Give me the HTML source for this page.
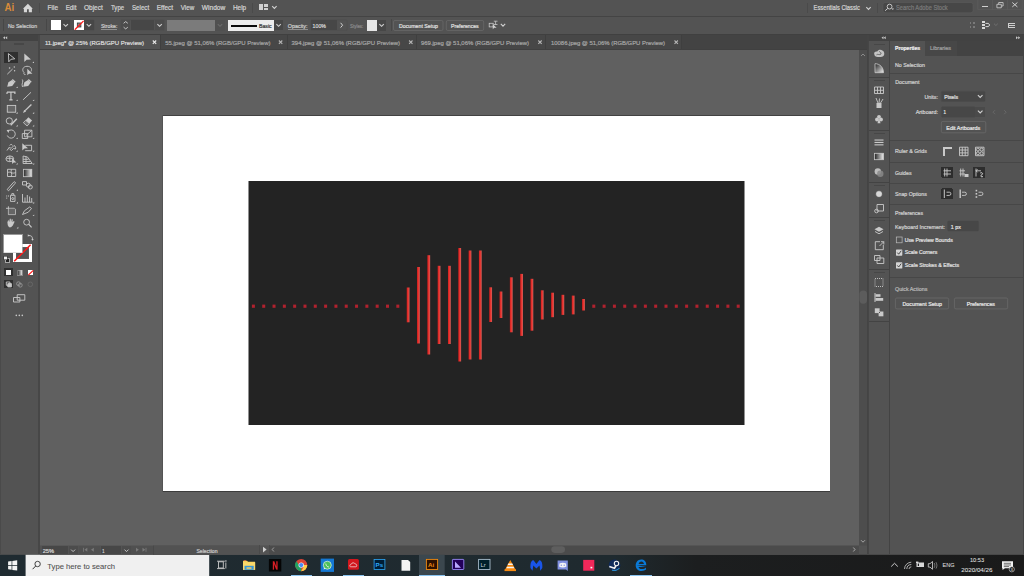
<!DOCTYPE html>
<html><head><meta charset="utf-8">
<style>
*{margin:0;padding:0}
html,body{width:1024px;height:576px;overflow:hidden;background:#535353}
svg{position:absolute;left:0;top:0;display:block}
text{font-family:"Liberation Sans",sans-serif;white-space:pre;stroke-width:0.22px;paint-order:stroke}
</style></head><body>
<svg width="1024" height="576" viewBox="0 0 1024 576" shape-rendering="crispEdges">
<rect x="0" y="0" width="1024" height="576" fill="#535353" />
<rect x="0" y="16" width="1024" height="1" fill="#444444" />
<rect x="0" y="34" width="1024" height="1" fill="#404040" />
<rect x="0" y="35" width="38" height="6" fill="#424242" />
<rect x="38" y="35" width="2" height="519" fill="#474747" />
<rect x="40" y="35" width="819" height="15" fill="#424242" />
<rect x="40" y="50" width="819" height="495.7" fill="#606060" shape-rendering="geometricPrecision"/>
<rect x="162" y="115" width="668" height="1" fill="#424242" />
<rect x="162" y="491" width="668" height="1" fill="#3c3c3c" />
<rect x="162" y="115" width="1" height="377" fill="#545454" />
<rect x="163" y="116" width="667" height="375" fill="#ffffff" />
<rect x="248.5" y="181" width="496" height="244" fill="#232323" shape-rendering="geometricPrecision"/>
<rect x="859" y="50" width="8" height="495.7" fill="#4d4d4d" shape-rendering="geometricPrecision"/>
<rect x="859" y="545.7" width="8" height="9.1" fill="#535353" shape-rendering="geometricPrecision"/>
<rect x="867" y="35" width="2" height="519" fill="#444444" />
<rect x="869" y="35" width="155" height="6" fill="#424242" />
<rect x="889" y="41" width="1" height="513" fill="#424242" />
<defs><linearGradient id="tb" x1="0" x2="1" y1="0" y2="0"><stop offset="0" stop-color="#1f2b31"/><stop offset="0.6" stop-color="#1f2a2f"/><stop offset="0.68" stop-color="#1c1e1f"/><stop offset="1" stop-color="#1a1a1a"/></linearGradient></defs>
<rect x="0" y="554.8" width="1024" height="21.2" fill="url(#tb)" shape-rendering="geometricPrecision"/>
<rect x="25.6" y="554.8" width="183.6" height="21.2" fill="#f0f0f0" shape-rendering="geometricPrecision"/>
<text x="4.5" y="11.2" font-size="11" font-weight="700" fill="#d88b3a" textLength="9.7" lengthAdjust="spacingAndGlyphs" style="font-family:Liberation Sans">Ai</text>
<path d="M22.9 8.7 L27.9 3.75 L32.8 8.7 L31.9 8.7 L31.9 12.2 L28.8 12.2 L28.8 9.2 L27 9.2 L27 12.2 L23.9 12.2 L23.9 8.7 Z" fill="#d6d6d6" shape-rendering="geometricPrecision"/>
<rect x="39" y="3" width="1" height="10" fill="#4a4a4a" />
<rect x="252" y="3" width="1" height="10" fill="#4a4a4a" />
<rect x="258.6" y="3.75" width="4.6" height="6.35" fill="#cfcfcf" />
<rect x="264.3" y="3.75" width="3.9" height="3.1" fill="#cfcfcf" />
<rect x="264.3" y="7.6" width="3.9" height="2.5" fill="#cfcfcf" />
<path d="M272.20 6.20 L274.40 8.40 L276.60 6.20" fill="none" stroke="#d0d0d0" stroke-width="1.15" shape-rendering="geometricPrecision"/>
<rect x="807" y="3" width="1" height="10" fill="#4a4a4a" />
<path d="M866.30 7.20 L868.50 9.40 L870.70 7.20" fill="none" stroke="#d0d0d0" stroke-width="1.15" shape-rendering="geometricPrecision"/>
<rect x="877" y="3" width="1" height="10" fill="#4a4a4a" />
<rect x="883" y="2.5" width="90" height="10.3" rx="2" fill="#474747" stroke="#5c5c5c" stroke-width="0.6" shape-rendering="geometricPrecision"/>
<circle cx="889.6" cy="6.6" r="2.4" fill="none" stroke="#d0d0d0" stroke-width="0.9" shape-rendering="geometricPrecision"/><path d="M887.8 8.4 L885.2 10.7" stroke="#d0d0d0" stroke-width="1" shape-rendering="geometricPrecision"/><path d="M891.6 8.6 L894 8.6 L892.8 9.9 Z" fill="#d0d0d0" shape-rendering="geometricPrecision"/>
<path d="M977.8 0 V9.7 H1022.2 V0 M992.5 0 V9.7 M1007.5 0 V9.7" fill="none" stroke="#5f5f5f" stroke-width="0.6" shape-rendering="geometricPrecision"/>
<rect x="982.2" y="6.2" width="5.6" height="1" fill="#d0d0d0" />
<path d="M996.9 4.3 H1001.3 V7.8 H996.9 Z M998.7 4.3 V2.5 H1003.1 V6 H1001.3" fill="none" stroke="#d0d0d0" stroke-width="0.8" shape-rendering="geometricPrecision"/>
<path d="M1012.3 2.5 L1017.4 6.9 M1017.4 2.5 L1012.3 6.9" stroke="#d0d0d0" stroke-width="1" shape-rendering="geometricPrecision"/>
<rect x="3" y="19" width="1" height="12" fill="#474747" />
<rect x="46" y="19" width="1" height="12" fill="#474747" />
<rect x="49.5" y="19.8" width="21.3" height="10.8" rx="1" fill="none" stroke="#4f4f4f" stroke-width="0.7" shape-rendering="geometricPrecision"/>
<rect x="50.5" y="20.1" width="10.6" height="10.3" fill="#ffffff" />
<rect x="61.1" y="20.1" width="9.1" height="10.3" fill="#474747" />
<path d="M63.50 24.10 L65.70 26.30 L67.90 24.10" fill="none" stroke="#d0d0d0" stroke-width="1.15" shape-rendering="geometricPrecision"/>
<rect x="73" y="19.8" width="21.3" height="10.8" rx="1" fill="none" stroke="#4f4f4f" stroke-width="0.7" shape-rendering="geometricPrecision"/>
<rect x="74" y="20.1" width="10.2" height="10.3" fill="#ffffff" />
<rect x="77.3" y="23" width="3.6" height="4" fill="#8a8a8a" stroke="#333" stroke-width="0.8" shape-rendering="geometricPrecision"/>
<path d="M74.8 29.8 L83.6 20.9" stroke="#ff1a1a" stroke-width="1.3" shape-rendering="geometricPrecision"/>
<rect x="84.2" y="20.1" width="9.4" height="10.3" fill="#474747" />
<path d="M86.70 24.10 L88.90 26.30 L91.10 24.10" fill="none" stroke="#d0d0d0" stroke-width="1.15" shape-rendering="geometricPrecision"/>
<rect x="100.9" y="28.9" width="16.5" height="0.6" fill="#8e8e8e" />
<rect x="120.8" y="19.9" width="43.5" height="10.5" rx="1" fill="none" stroke="#4f4f4f" stroke-width="0.7" shape-rendering="geometricPrecision"/>
<rect x="121.3" y="20.3" width="8.9" height="9.9" fill="#4c4c4c" />
<path d="M123.6 23.3 L125.7 21.6 L127.8 23.3 M123.6 27.2 L125.7 28.9 L127.8 27.2" fill="none" stroke="#d0d0d0" stroke-width="0.9" shape-rendering="geometricPrecision"/>
<rect x="130.9" y="20.3" width="23.1" height="9.9" fill="#474747" />
<rect x="155.4" y="20.3" width="8.5" height="9.9" fill="#4c4c4c" />
<path d="M157.40 24.10 L159.60 26.30 L161.80 24.10" fill="none" stroke="#d0d0d0" stroke-width="1.15" shape-rendering="geometricPrecision"/>
<rect x="167" y="19.7" width="48.3" height="11.1" fill="#7b7b7b" />
<rect x="215.3" y="19.7" width="9.5" height="11.1" fill="#505050" />
<path d="M217.80 24.10 L220.00 26.30 L222.20 24.10" fill="none" stroke="#6a6a6a" stroke-width="1.15" shape-rendering="geometricPrecision"/>
<rect x="228.2" y="19.7" width="45.7" height="10.8" fill="#ececec" />
<rect x="231" y="24.5" width="26" height="2" fill="#0a0a0a" />
<rect x="273.9" y="19.9" width="9.5" height="10.5" fill="#474747" />
<path d="M276.40 24.10 L278.60 26.30 L280.80 24.10" fill="none" stroke="#d0d0d0" stroke-width="1.15" shape-rendering="geometricPrecision"/>
<rect x="287.8" y="28.9" width="19.7" height="0.6" fill="#8e8e8e" />
<rect x="310.8" y="19.9" width="36.3" height="10.5" rx="1" fill="none" stroke="#4f4f4f" stroke-width="0.7" shape-rendering="geometricPrecision"/>
<rect x="311.3" y="20.3" width="25.4" height="9.9" fill="#474747" />
<path d="M340.6 22.8 L342.6 25.2 L340.6 27.6" fill="none" stroke="#d0d0d0" stroke-width="1" shape-rendering="geometricPrecision"/>
<rect x="367" y="20.3" width="9.9" height="10.3" fill="#e6e6e6" />
<rect x="376.9" y="20.3" width="9.5" height="10.3" fill="#474747" />
<path d="M379.40 24.10 L381.60 26.30 L383.80 24.10" fill="none" stroke="#d0d0d0" stroke-width="1.15" shape-rendering="geometricPrecision"/>
<rect x="390.5" y="19" width="1" height="12" fill="#484848" />
<rect x="393.5" y="20.5" width="49.5" height="10" rx="1.5" fill="#535353" stroke="#6c6c6c" stroke-width="0.7" shape-rendering="geometricPrecision"/>
<rect x="446.3" y="20.5" width="37.4" height="10" rx="1.5" fill="#535353" stroke="#6c6c6c" stroke-width="0.7" shape-rendering="geometricPrecision"/>
<g fill="none" stroke="#c8c8c8" stroke-width="0.8" shape-rendering="geometricPrecision"><rect x="489.2" y="23.3" width="4" height="3.6"/><path d="M493.8 21.2 H497.5 M495.6 21.2 V24.5 M493.8 24.5 H497.5"/></g><path d="M492.8 24.2 L492.8 29.2 L494.2 27.8 L496.6 27.8 Z" fill="#d0d0d0" shape-rendering="geometricPrecision"/>
<path d="M500.80 23.90 L503.00 26.10 L505.20 23.90" fill="none" stroke="#d0d0d0" stroke-width="1.15" shape-rendering="geometricPrecision"/>
<rect x="969.5" y="22.2" width="1.9" height="1.9" fill="#7a7a7a" />
<rect x="969.5" y="26" width="1.9" height="1.9" fill="#7a7a7a" />
<rect x="973.3" y="22.2" width="1.9" height="1.9" fill="#7a7a7a" />
<rect x="973.3" y="26" width="1.9" height="1.9" fill="#7a7a7a" />
<rect x="982.3" y="21.1" width="2.4" height="2.2" fill="#d8d8d8" />
<rect x="982.3" y="24.2" width="2.4" height="2.2" fill="#d8d8d8" />
<rect x="982.3" y="27" width="2.4" height="2.2" fill="#d8d8d8" />
<path d="M985.5 23.4 H988.3 A1.7 1.7 0 0 1 988.3 26.6 H985.5" fill="none" stroke="#d8d8d8" stroke-width="1" shape-rendering="geometricPrecision"/>
<path d="M994.00 23.70 L995.90 25.50 L997.80 23.70" fill="none" stroke="#7a7a7a" stroke-width="0.7" shape-rendering="geometricPrecision"/>
<rect x="1008.2" y="22.9" width="6.5" height="0.9" fill="#cfcfcf" />
<rect x="1008.2" y="25" width="6.5" height="0.9" fill="#cfcfcf" />
<rect x="1008.2" y="26.8" width="6.5" height="0.9" fill="#cfcfcf" />
<rect x="1008.2" y="22.9" width="1.2" height="4.8" fill="#cfcfcf" />
<rect x="40" y="35" width="827" height="14" fill="#434343" />
<rect x="40" y="49" width="827" height="1" fill="#404040" />
<rect x="40" y="35" width="120" height="14" fill="#535353" />
<rect x="161" y="35" width="126" height="14" fill="#474747" />
<rect x="160" y="35" width="1" height="14" fill="#3f3f3f" />
<rect x="288" y="35" width="128" height="14" fill="#474747" />
<rect x="287" y="35" width="1" height="14" fill="#3f3f3f" />
<rect x="417" y="35" width="128" height="14" fill="#474747" />
<rect x="416" y="35" width="1" height="14" fill="#3f3f3f" />
<rect x="546" y="35" width="135" height="14" fill="#474747" />
<rect x="545" y="35" width="1" height="14" fill="#3f3f3f" />
<rect x="681" y="35" width="1" height="14" fill="#3f3f3f" />
<path d="M152.80 40.50 L156.20 43.90 M156.20 40.50 L152.80 43.90" stroke="#e8e8e8" stroke-width="1.1" shape-rendering="geometricPrecision"/>
<path d="M278.90 40.50 L282.30 43.90 M282.30 40.50 L278.90 43.90" stroke="#b4b4b4" stroke-width="1.1" shape-rendering="geometricPrecision"/>
<path d="M409.10 40.50 L412.50 43.90 M412.50 40.50 L409.10 43.90" stroke="#b4b4b4" stroke-width="1.1" shape-rendering="geometricPrecision"/>
<path d="M538.30 40.50 L541.70 43.90 M541.70 40.50 L538.30 43.90" stroke="#b4b4b4" stroke-width="1.1" shape-rendering="geometricPrecision"/>
<path d="M674.50 40.50 L677.90 43.90 M677.90 40.50 L674.50 43.90" stroke="#b4b4b4" stroke-width="1.1" shape-rendering="geometricPrecision"/>
<rect x="0" y="35" width="38" height="6" fill="#434343" />
<rect x="0" y="41" width="1" height="513" fill="#4a4a4a" />
<path d="M5 36.3 L3 37.8 L5 39.3 Z M7.2 36.3 L5.2 37.8 L7.2 39.3 Z" fill="#c8c8c8" shape-rendering="geometricPrecision"/>
<rect x="13.8" y="43.3" width="10.1" height="1.4" fill="#474747" />
<rect x="4" y="52" width="14.2" height="11" rx="1" fill="#2f2f2f"/>
<g fill="none" stroke="#c9c9c9" stroke-width="0.9" stroke-linejoin="round" shape-rendering="geometricPrecision"><path d="M8.4 53.6 L8.8 61.8 L10.9 59.3 L14.8 58.8 Z"/></g>
<g fill="#c9c9c9" stroke="none" shape-rendering="geometricPrecision"><path d="M24.3 53.5 L24.3 61.9 L26.6 59.7 L31 59.6 Z"/></g>
<path d="M34.00 61.40 L34.00 63.00 L32.40 63.00 Z" fill="#cfcfcf" shape-rendering="geometricPrecision"/>
<g fill="none" stroke="#c9c9c9" stroke-width="0.9" stroke-linejoin="round" shape-rendering="geometricPrecision"><path d="M7.3 74.2 L12.6 69"/></g>
<g fill="#c9c9c9" stroke="none" shape-rendering="geometricPrecision"><circle cx="9.6" cy="68" r="0.8"/><circle cx="14.3" cy="67" r="0.7"/><circle cx="14.6" cy="70.7" r="0.7"/></g>
<g fill="none" stroke="#c9c9c9" stroke-width="0.9" stroke-linejoin="round" shape-rendering="geometricPrecision"><path d="M24 72.5 C21.5 70 23 66.3 27 66.3 C31 66.3 32.3 69 31 71.5"/><path d="M24 72.5 C23.5 74 24.5 75 25.5 74.5"/></g>
<g fill="#c9c9c9" stroke="none" shape-rendering="geometricPrecision"><path d="M27.3 68.8 L27.3 75.3 L29 73.7 L32.4 73.7 Z"/></g>
<g fill="#c9c9c9" stroke="none" shape-rendering="geometricPrecision"><path d="M7.2 86.8 L8.4 82.2 L12 80 L14.6 82.8 L12.2 86 Z"/></g>
<path d="M12.3 79.5 L15.2 82.3" stroke="#c9c9c9" stroke-width="1.4" shape-rendering="geometricPrecision"/>
<g fill="#c9c9c9" stroke="none" shape-rendering="geometricPrecision"><path d="M23.2 86.8 L24.4 82.2 L28 80 L30.6 82.8 L28.2 86 Z"/></g>
<path d="M28.3 79.5 L31.2 82.3" stroke="#c9c9c9" stroke-width="1.4" shape-rendering="geometricPrecision"/>
<g fill="none" stroke="#c9c9c9" stroke-width="0.9" stroke-linejoin="round" shape-rendering="geometricPrecision"><path d="M22.3 79.5 C24 81 21 84 22.5 87"/></g>
<path d="M17.70 86.40 L17.70 88.00 L16.10 88.00 Z" fill="#cfcfcf" shape-rendering="geometricPrecision"/>
<path d="M7 92.2 H14.9 V94 M7 92.2 V94 M10.95 92.2 V99.9 M9.3 99.9 H12.6" fill="none" stroke="#c9c9c9" stroke-width="1.2" shape-rendering="geometricPrecision"/>
<g fill="none" stroke="#c9c9c9" stroke-width="0.9" stroke-linejoin="round" shape-rendering="geometricPrecision"><path d="M23.1 99.8 L31 92.3"/></g>
<path d="M17.70 99.40 L17.70 101.00 L16.10 101.00 Z" fill="#cfcfcf" shape-rendering="geometricPrecision"/>
<path d="M34.20 99.40 L34.20 101.00 L32.60 101.00 Z" fill="#cfcfcf" shape-rendering="geometricPrecision"/>
<rect x="7.3" y="105.4" width="8.4" height="6.8" fill="#666" stroke="#c9c9c9" stroke-width="0.9" shape-rendering="geometricPrecision"/>
<g fill="#c9c9c9" stroke="none" shape-rendering="geometricPrecision"><path d="M23 113 L24 110.2 L25.6 109.8 L26 111.4 Z"/></g>
<path d="M25.4 110.4 L31.4 104.5" stroke="#c9c9c9" stroke-width="1.3" shape-rendering="geometricPrecision"/>
<path d="M17.70 112.10 L17.70 113.70 L16.10 113.70 Z" fill="#cfcfcf" shape-rendering="geometricPrecision"/>
<path d="M34.20 112.10 L34.20 113.70 L32.60 113.70 Z" fill="#cfcfcf" shape-rendering="geometricPrecision"/>
<g fill="none" stroke="#c9c9c9" stroke-width="0.9" stroke-linejoin="round" shape-rendering="geometricPrecision"><circle cx="9.3" cy="120.9" r="3.1"/></g>
<path d="M10.7 125.3 L16.8 118.8" stroke="#c9c9c9" stroke-width="1.4" shape-rendering="geometricPrecision"/>
<path d="M23.4 122.7 L28.4 117.3 L32.1 120.5 L27.1 126 Z" fill="#c9c9c9" shape-rendering="geometricPrecision"/><path d="M23.4 122.7 L25.6 120.3 L29.3 123.5 L27.1 126 Z" fill="#707070" stroke="#c9c9c9" stroke-width="0.7" shape-rendering="geometricPrecision"/>
<path d="M17.70 124.80 L17.70 126.40 L16.10 126.40 Z" fill="#cfcfcf" shape-rendering="geometricPrecision"/>
<path d="M34.20 124.80 L34.20 126.40 L32.60 126.40 Z" fill="#cfcfcf" shape-rendering="geometricPrecision"/>
<g fill="none" stroke="#c9c9c9" stroke-width="0.9" stroke-linejoin="round" shape-rendering="geometricPrecision"><path d="M8.2 131.2 A4.1 4.1 0 1 1 7.3 135.5"/></g>
<g fill="#c9c9c9" stroke="none" shape-rendering="geometricPrecision"><path d="M6.6 130 L9.6 129.8 L8.4 133 Z"/></g>
<g fill="none" stroke="#c9c9c9" stroke-width="0.9" stroke-linejoin="round" shape-rendering="geometricPrecision"><rect x="22.3" y="133.6" width="5.4" height="4.9"/><rect x="24.6" y="130.2" width="7.3" height="6.6"/><path d="M26 135.5 L31.6 130.4"/></g>
<path d="M17.70 137.40 L17.70 139.00 L16.10 139.00 Z" fill="#cfcfcf" shape-rendering="geometricPrecision"/>
<path d="M34.20 137.40 L34.20 139.00 L32.60 139.00 Z" fill="#cfcfcf" shape-rendering="geometricPrecision"/>
<g fill="none" stroke="#c9c9c9" stroke-width="0.9" stroke-linejoin="round" shape-rendering="geometricPrecision"><path d="M7 150.5 L9.5 147 L11 148.5 L14 145.5 C15.5 146 16 147.5 15.5 149 L13.5 148.5 L11.5 150.5 L9.5 149"/><path d="M9.7 145.5 C10.5 144 12 144.2 12.6 145.5"/></g>
<g fill="none" stroke="#c9c9c9" stroke-width="0.9" stroke-linejoin="round" shape-rendering="geometricPrecision"><path d="M25.2 145.3 H31.6 V150.7 H25.2"/></g>
<g fill="#c9c9c9" stroke="none" shape-rendering="geometricPrecision"><path d="M22.3 143.3 L22.3 150.5 L24.4 148.5 L28 148.3 Z"/></g>
<path d="M17.70 150.20 L17.70 151.80 L16.10 151.80 Z" fill="#cfcfcf" shape-rendering="geometricPrecision"/>
<path d="M34.20 150.20 L34.20 151.80 L32.60 151.80 Z" fill="#cfcfcf" shape-rendering="geometricPrecision"/>
<g fill="none" stroke="#c9c9c9" stroke-width="0.9" stroke-linejoin="round" shape-rendering="geometricPrecision"><ellipse cx="9.8" cy="158.8" rx="3.9" ry="2.9"/><path d="M6.3 158.3 H13.3 M9.8 156 V161.6"/></g>
<g fill="#c9c9c9" stroke="none" shape-rendering="geometricPrecision"><path d="M12.1 158.2 L12.1 164 L13.7 162.5 L16.4 162.5 Z"/></g>
<g fill="none" stroke="#c9c9c9" stroke-width="0.9" stroke-linejoin="round" shape-rendering="geometricPrecision"><path d="M23.1 156 V163.5 H32.2 L27.5 157 Z M23.1 159.3 H28.5 M23.1 161.5 H30.5 M26 156.5 V163.5"/></g>
<path d="M17.70 162.90 L17.70 164.50 L16.10 164.50 Z" fill="#cfcfcf" shape-rendering="geometricPrecision"/>
<path d="M34.20 162.90 L34.20 164.50 L32.60 164.50 Z" fill="#cfcfcf" shape-rendering="geometricPrecision"/>
<g fill="none" stroke="#c9c9c9" stroke-width="0.9" stroke-linejoin="round" shape-rendering="geometricPrecision"><rect x="7.5" y="169.3" width="8.2" height="7.2"/><path d="M8 172.5 C10 171 12 174.5 15.5 172.5 M11.5 169.5 C10 172 13 174 11 176.5"/></g>
<defs><linearGradient id="gr1" x1="0" x2="1"><stop offset="0" stop-color="#222"/><stop offset="1" stop-color="#eee"/></linearGradient></defs>
<rect x="23.4" y="169.3" width="8.4" height="7.4" fill="url(#gr1)" stroke="#c9c9c9" stroke-width="0.8" shape-rendering="geometricPrecision"/>
<g fill="none" stroke="#c9c9c9" stroke-width="0.9" stroke-linejoin="round" shape-rendering="geometricPrecision"><path d="M7.2 189.5 L13.6 182.2 C14.6 181 16 182.4 15 183.5 L8.6 190.8 Z"/></g>
<g fill="none" stroke="#c9c9c9" stroke-width="0.9" stroke-linejoin="round" shape-rendering="geometricPrecision"><rect x="22.5" y="181.6" width="4" height="3.4"/><circle cx="28.3" cy="185.2" r="2"/><circle cx="30.3" cy="187" r="2"/></g>
<path d="M18.00 189.20 L18.00 190.80 L16.40 190.80 Z" fill="#cfcfcf" shape-rendering="geometricPrecision"/>
<g fill="none" stroke="#c9c9c9" stroke-width="0.9" stroke-linejoin="round" shape-rendering="geometricPrecision"><rect x="10.5" y="195.3" width="4.5" height="6.1"/><circle cx="12.75" cy="198.6" r="1"/><path d="M11.8 195.3 V193.6 H13.7 V195.3"/></g>
<g fill="#c9c9c9" stroke="none" shape-rendering="geometricPrecision"><rect x="6.2" y="195.5" width="1" height="1"/><rect x="8" y="195.5" width="1" height="1"/><rect x="6.2" y="197.6" width="1" height="1"/></g>
<g fill="none" stroke="#c9c9c9" stroke-width="0.9" stroke-linejoin="round" shape-rendering="geometricPrecision"><path d="M22.5 194 V202.2 H32.6 M25 202 V197.5 M27.3 202 V195 M29.6 202 V196.5 M31.7 202 V198"/></g>
<path d="M18.00 201.80 L18.00 203.40 L16.40 203.40 Z" fill="#cfcfcf" shape-rendering="geometricPrecision"/>
<path d="M34.20 201.80 L34.20 203.40 L32.60 203.40 Z" fill="#cfcfcf" shape-rendering="geometricPrecision"/>
<g fill="none" stroke="#c9c9c9" stroke-width="0.9" stroke-linejoin="round" shape-rendering="geometricPrecision"><path d="M6 208.3 H14.5 L15.4 209.2 V214.6 H8.4 V206.3"/></g>
<rect x="8.8" y="208.8" width="6.2" height="5.4" fill="#666" shape-rendering="geometricPrecision"/>
<g fill="none" stroke="#c9c9c9" stroke-width="0.9" stroke-linejoin="round" shape-rendering="geometricPrecision"><path d="M22.5 214.5 L24.5 210.7 L29.7 207 L31.5 208.5 L28.3 212.2 Z"/></g>
<path d="M34.20 214.40 L34.20 216.00 L32.60 216.00 Z" fill="#cfcfcf" shape-rendering="geometricPrecision"/>
<g fill="#c9c9c9" stroke="none" shape-rendering="geometricPrecision"><path d="M7.4 222.3 L8.3 219.7 L9.2 222 L9.8 218.7 L10.8 218.7 L11 222 L11.8 219 L12.8 219.5 L12.5 222.3 L13.8 221 L14.6 221.8 L12.8 225.6 L11 227.3 L9 227.3 L7.8 225.3 Z"/></g>
<path d="M18.30 226.80 L18.30 228.40 L16.70 228.40 Z" fill="#cfcfcf" shape-rendering="geometricPrecision"/>
<g fill="none" stroke="#c9c9c9" stroke-width="0.9" stroke-linejoin="round" shape-rendering="geometricPrecision"><circle cx="26.6" cy="222.2" r="2.9"/></g>
<path d="M28.8 224.4 L31.6 227.3" stroke="#c9c9c9" stroke-width="1.2" shape-rendering="geometricPrecision"/>
<rect x="3" y="231.5" width="32" height="0.7" fill="#474747" />
<rect x="13" y="243.8" width="18.6" height="18.5" fill="#ffffff" />
<rect x="17" y="247.8" width="10.6" height="10.5" fill="#535353" />
<rect x="16.5" y="247.3" width="11.6" height="11.5" fill="none" stroke="#333" stroke-width="0.8"/>
<path d="M14.2 261.3 L30.6 244.8" stroke="#ff1818" stroke-width="1.5" shape-rendering="geometricPrecision"/>
<rect x="3.8" y="234.5" width="18.4" height="18.3" fill="#ffffff" stroke="#c8c8c8" stroke-width="0.6"/>
<g fill="none" stroke="#c9c9c9" stroke-width="0.9" stroke-linejoin="round" shape-rendering="geometricPrecision"><path d="M28.5 235.5 C31.5 235.5 32.5 236.5 32.5 239.5"/></g>
<g fill="#c9c9c9" stroke="none" shape-rendering="geometricPrecision"><path d="M27.8 234.3 L29.6 235.5 L27.8 236.8 Z M31.3 238.9 L32.5 240.7 L33.8 238.9 Z"/></g>
<rect x="5.8" y="258.5" width="3.6" height="3.6" fill="#222" stroke="#ddd" stroke-width="0.6"/><rect x="3.6" y="256.3" width="3.6" height="3.6" fill="#eee" stroke="#333" stroke-width="0.6"/>
<rect x="4" y="268.3" width="9.2" height="8" fill="#2f2f2f"/>
<rect x="6" y="270.3" width="5.2" height="4.8" fill="#ffffff" />
<rect x="17.3" y="270.3" width="5" height="4.8" fill="url(#gr1)" stroke="#bbb" stroke-width="0.5"/>
<rect x="28.2" y="270.3" width="5.2" height="4.8" fill="#ffffff" />
<path d="M28.4 275 L33.3 270.4" stroke="#ff1818" stroke-width="1.1" shape-rendering="geometricPrecision"/>
<rect x="4" y="280.3" width="9.2" height="8" fill="#2f2f2f"/>
<g fill="none" stroke="#c9c9c9" stroke-width="0.9" stroke-linejoin="round" shape-rendering="geometricPrecision"><rect x="6.3" y="282" width="3.6" height="3.3"/><rect x="7.8" y="283.6" width="3.6" height="3.3" fill="#c9c9c9"/></g>
<g fill="none" stroke="#9a9a9a" stroke-width="0.8" shape-rendering="geometricPrecision"><circle cx="18.5" cy="283.7" r="1.9"/><circle cx="20.3" cy="285.2" r="1.9"/></g>
<g fill="none" stroke="#6a6a6a" stroke-width="0.8" shape-rendering="geometricPrecision"><circle cx="30.3" cy="284.3" r="2.3"/></g>
<g fill="none" stroke="#c9c9c9" stroke-width="0.9" stroke-linejoin="round" shape-rendering="geometricPrecision"><rect x="13.5" y="297.5" width="6.4" height="4.5"/><rect x="17.2" y="294.7" width="7.6" height="5.5"/></g>
<g fill="#c9c9c9" stroke="none" shape-rendering="geometricPrecision"><circle cx="16.3" cy="315.4" r="0.8"/><circle cx="19.3" cy="315.4" r="0.8"/><circle cx="22.3" cy="315.4" r="0.8"/></g>
<path d="M883.5 36.3 L881.5 37.8 L883.5 39.3 Z M885.7 36.3 L883.7 37.8 L885.7 39.3 Z M1016 36.3 L1018 37.8 L1016 39.3 Z M1018.2 36.3 L1020.2 37.8 L1018.2 39.3 Z" fill="#c8c8c8" shape-rendering="geometricPrecision"/>
<rect x="869" y="41" width="20" height="513" fill="#535353" />
<rect x="869" y="77" width="20" height="1" fill="#434343" />
<rect x="869" y="129.5" width="20" height="1" fill="#434343" />
<rect x="869" y="181.5" width="20" height="1" fill="#434343" />
<rect x="869" y="217" width="20" height="1" fill="#434343" />
<rect x="869" y="269" width="20" height="1" fill="#434343" />
<rect x="869" y="320.5" width="20" height="1" fill="#434343" />
<rect x="873.5" y="43.5" width="11" height="1.3" fill="#474747" />
<rect x="873.5" y="80" width="11" height="1.3" fill="#474747" />
<rect x="873.5" y="132.5" width="11" height="1.3" fill="#474747" />
<rect x="873.5" y="184.5" width="11" height="1.3" fill="#474747" />
<rect x="873.5" y="220" width="11" height="1.3" fill="#474747" />
<rect x="873.5" y="272" width="11" height="1.3" fill="#474747" />
<rect x="868" y="41" width="1" height="513" fill="#464646" />
<rect x="889" y="41" width="1" height="513" fill="#434343" />
<path d="M874.3 54.3 C873.6 52.3 875.3 51 877.3 51.5 C878 49.5 881 49 882.3 50.5 C884.3 51 884.8 54 883.8 55.5 C883 57 880 57.2 878 57 C875.5 57 874.6 56 874.3 54.3 Z" fill="#c4c4c4" shape-rendering="geometricPrecision"/><path d="M876.5 54.8 C877.5 53.6 879.5 55.5 881 54 M879.2 51.5 C880.5 52 881.2 53 881 54" fill="none" stroke="#555" stroke-width="0.8" shape-rendering="geometricPrecision"/>
<defs><linearGradient id="gr2" x1="0" x2="1" y1="0" y2="1"><stop offset="0" stop-color="#202020"/><stop offset="1" stop-color="#f0f0f0"/></linearGradient></defs>
<path d="M875 63.7 C880 63.7 883.5 67.5 883.5 72.7 L875 72.7 Z" fill="url(#gr2)" stroke="#c9c9c9" stroke-width="0.8" shape-rendering="geometricPrecision"/>
<g fill="none" stroke="#c9c9c9" stroke-width="0.9" stroke-linejoin="round" shape-rendering="geometricPrecision"><rect x="874.5" y="87" width="9" height="6.5"/><path d="M874.5 90.3 H883.5 M877.5 87 V93.5 M880.5 87 V93.5"/></g>
<g fill="#c9c9c9" stroke="none" shape-rendering="geometricPrecision"><rect x="876.5" y="103" width="5" height="5"/><path d="M878 103 L876 98 M879 103 L879.5 98.5 M880.5 103 L883 99" stroke="#c9c9c9" stroke-width="0.9"/></g>
<g fill="#c9c9c9" stroke="none" shape-rendering="geometricPrecision"><circle cx="879" cy="116.8" r="1.9"/><circle cx="877" cy="119.5" r="1.9"/><circle cx="881" cy="119.5" r="1.9"/><path d="M878.5 119.5 L877.5 123.3 H880.5 L879.5 119.5 Z"/></g>
<g fill="#c9c9c9" stroke="none" shape-rendering="geometricPrecision"><rect x="874.5" y="139.5" width="9" height="1.1"/><rect x="874.5" y="141.9" width="9" height="1.1"/><rect x="874.5" y="144.3" width="9" height="1.1"/></g>
<rect x="874.5" y="153.3" width="9" height="6.4" fill="url(#gr1)" stroke="#c9c9c9" stroke-width="0.8" shape-rendering="geometricPrecision"/>
<circle cx="877.8" cy="171.5" r="3.2" fill="#bdbdbd" shape-rendering="geometricPrecision"/><circle cx="880.3" cy="173.8" r="3.2" fill="#8a8a8a" fill-opacity="0.85" shape-rendering="geometricPrecision"/>
<circle cx="879" cy="194" r="3" fill="#d8d8d8" stroke="#9a9a9a" stroke-width="0.8" stroke-dasharray="0.7 0.7" shape-rendering="geometricPrecision"/>
<g fill="none" stroke="#c9c9c9" stroke-width="0.9" stroke-linejoin="round" shape-rendering="geometricPrecision"><rect x="877" y="204.5" width="6.5" height="6.5"/><circle cx="876.5" cy="211" r="1.8"/></g>
<g fill="#c9c9c9" stroke="none" shape-rendering="geometricPrecision"><path d="M879 226.8 L883.5 229.3 L879 231.8 L874.5 229.3 Z"/><path d="M875 231.5 L879 233.8 L883 231.5" fill="none" stroke="#c9c9c9" stroke-width="0.9"/></g>
<g fill="none" stroke="#c9c9c9" stroke-width="0.9" stroke-linejoin="round" shape-rendering="geometricPrecision"><path d="M880 241.7 H875.3 V249.7 H883.3 V245 M879.5 246 L883.8 241.7 M881 241.7 H883.8 V244.5"/></g>
<g fill="none" stroke="#c9c9c9" stroke-width="0.9" stroke-linejoin="round" shape-rendering="geometricPrecision"><rect x="874.5" y="255.5" width="5.5" height="5"/><rect x="877" y="258" width="6.8" height="5.5"/></g>
<rect x="875" y="278.5" width="8" height="8" fill="none" stroke="#c9c9c9" stroke-width="0.9" stroke-dasharray="1 1" shape-rendering="geometricPrecision"/><circle cx="879" cy="282.5" r="0.5" fill="#c9c9c9"/>
<g fill="#c9c9c9" stroke="none" shape-rendering="geometricPrecision"><rect x="874.5" y="293" width="1" height="9"/><rect x="875.5" y="294.2" width="5" height="2.6"/><rect x="875.5" y="298" width="7.7" height="2.8"/></g>
<g fill="#c9c9c9" stroke="none" shape-rendering="geometricPrecision"><rect x="874.8" y="308.3" width="4.8" height="4.8"/><rect x="878.6" y="311.5" width="4.8" height="4.8"/></g>
<rect x="878.6" y="311.5" width="1" height="1.6" fill="#535353"/>
<rect x="890" y="41" width="134" height="14.5" fill="#434343" />
<rect x="890" y="41" width="35" height="14.5" fill="#535353" />
<rect x="925" y="41" width="31.5" height="14.5" fill="#474747" />
<rect x="956.5" y="41" width="0.7" height="14.5" fill="#404040" />
<rect x="1023" y="41" width="1" height="513" fill="#444444" />
<rect x="890" y="72.6" width="133" height="1" fill="#474747" />
<rect x="890" y="139.8" width="133" height="1" fill="#474747" />
<rect x="890" y="162" width="133" height="1" fill="#474747" />
<rect x="890" y="183.4" width="133" height="1" fill="#474747" />
<rect x="890" y="203.5" width="133" height="1" fill="#474747" />
<rect x="890" y="276.8" width="133" height="1" fill="#474747" />
<rect x="941.4" y="91.4" width="43.6" height="10.1" rx="1" fill="#474747" stroke="#4c4c4c" stroke-width="0.6" shape-rendering="geometricPrecision"/>
<path d="M977.90 95.15 L980.20 97.45 L982.50 95.15" fill="none" stroke="#d0d0d0" stroke-width="1.15" shape-rendering="geometricPrecision"/>
<rect x="941.4" y="106.8" width="33.6" height="10.4" rx="1" fill="#474747" stroke="#4c4c4c" stroke-width="0.6" shape-rendering="geometricPrecision"/>
<rect x="975" y="107" width="10" height="10" fill="#4a4a4a" />
<path d="M977.90 110.65 L980.20 112.95 L982.50 110.65" fill="none" stroke="#d0d0d0" stroke-width="1.15" shape-rendering="geometricPrecision"/>
<path d="M995 110.2 L993 112.2 L995 114.2 M1004.2 110.2 L1006.2 112.2 L1004.2 114.2" fill="none" stroke="#6a6a6a" stroke-width="0.9" shape-rendering="geometricPrecision"/>
<rect x="941.3" y="121.4" width="44.5" height="11.4" rx="1.5" fill="#535353" stroke="#6e6e6e" stroke-width="0.7" shape-rendering="geometricPrecision"/>
<g fill="none" stroke="#c9c9c9" stroke-width="0.9" stroke-linejoin="round" shape-rendering="geometricPrecision"><path d="M943.5 156 V147.5 H952"/></g>
<g fill="#c9c9c9" stroke="none" shape-rendering="geometricPrecision"><rect x="943" y="147" width="2" height="9"/><rect x="943" y="147" width="9" height="2"/></g>
<g fill="none" stroke="#c9c9c9" stroke-width="0.9" stroke-linejoin="round" shape-rendering="geometricPrecision"><rect x="959.5" y="147.2" width="8.5" height="8.5"/><path d="M962.3 147.2 V155.7 M965.2 147.2 V155.7 M959.5 150 H968 M959.5 152.9 H968"/></g>
<g fill="none" stroke="#c9c9c9" stroke-width="0.9" stroke-linejoin="round" shape-rendering="geometricPrecision"><rect x="975.5" y="147.2" width="8.5" height="8.5"/><circle cx="977.9" cy="149.6" r="1.5"/><circle cx="981.6" cy="149.6" r="1.5"/><circle cx="977.9" cy="153.3" r="1.5"/><circle cx="981.6" cy="153.3" r="1.5"/></g>
<rect x="941.4" y="166.8" width="11.4" height="11.2" rx="1" fill="#2d2d2d"/><rect x="973.3" y="166.8" width="11.7" height="11.2" rx="1" fill="#2d2d2d"/>
<g fill="none" stroke="#c9c9c9" stroke-width="0.9" stroke-linejoin="round" shape-rendering="geometricPrecision"><path d="M944.7 168.5 V176.5 M947 168.5 V176.5 M943.5 170.8 H951 M943.5 174 H951"/></g>
<g fill="none" stroke="#c9c9c9" stroke-width="0.9" stroke-linejoin="round" shape-rendering="geometricPrecision"><path d="M960.7 168.5 V176.5 M963 168.5 V176.5 M959.5 170.8 H965 M959.5 174 H965"/></g>
<g fill="#c9c9c9" stroke="none" shape-rendering="geometricPrecision"><rect x="964.5" y="174" width="4" height="3"/></g>
<g fill="none" stroke="#c9c9c9" stroke-width="0.9" stroke-linejoin="round" shape-rendering="geometricPrecision"><path d="M976 168.5 V176.5 M976 170.8 H981 M977.5 169.3 L976 170.8 L977.5 172.3"/></g>
<g fill="#c9c9c9" stroke="none" shape-rendering="geometricPrecision"><path d="M980.3 173 C982.5 172 983.5 174 981.5 175 C980 175.7 981 177.5 983 176.5" fill="none" stroke="#e0e0e0" stroke-width="1"/></g>
<rect x="941.4" y="188.3" width="11.4" height="10.9" rx="1" fill="#2d2d2d"/>
<g fill="#c9c9c9" stroke="none" shape-rendering="geometricPrecision"><rect x="943.8" y="189.5" width="1" height="8.5"/></g>
<g fill="none" stroke="#c9c9c9" stroke-width="0.9" stroke-linejoin="round" shape-rendering="geometricPrecision"><path d="M946.5 192.2 H949.3 A1.6 1.6 0 0 1 949.3 195.4 H946.5"/></g>
<g fill="#c9c9c9" stroke="none" shape-rendering="geometricPrecision"><rect x="959.5" y="189.5" width="1.4" height="8.5"/></g>
<g fill="none" stroke="#c9c9c9" stroke-width="0.9" stroke-linejoin="round" shape-rendering="geometricPrecision"><path d="M962 192.2 H964.8 A1.6 1.6 0 0 1 964.8 195.4 H962"/></g>
<g fill="#c9c9c9" stroke="none" shape-rendering="geometricPrecision"><rect x="975.6" y="189.8" width="1.6" height="1.6"/><rect x="975.6" y="193" width="1.6" height="1.6"/><rect x="975.6" y="196.2" width="1.6" height="1.6"/></g>
<g fill="none" stroke="#c9c9c9" stroke-width="0.9" stroke-linejoin="round" shape-rendering="geometricPrecision"><path d="M978.5 192.2 H981.3 A1.6 1.6 0 0 1 981.3 195.4 H978.5"/></g>
<rect x="947.6" y="221" width="31" height="10" rx="1" fill="#474747" stroke="#4c4c4c" stroke-width="0.6" shape-rendering="geometricPrecision"/>
<rect x="896.3" y="237" width="5.8" height="5.8" fill="none" stroke="#bdbdbd" stroke-width="0.7" shape-rendering="geometricPrecision"/>
<rect x="896" y="249.5" width="6.3" height="6.2" rx="0.6" fill="#d4d4d4" shape-rendering="geometricPrecision"/><path d="M897.3 252.6 L898.7 254.2 L901.2 250.8" fill="none" stroke="#3a3a3a" stroke-width="0.9" shape-rendering="geometricPrecision"/>
<rect x="896" y="262.3" width="6.3" height="6.2" rx="0.6" fill="#d4d4d4" shape-rendering="geometricPrecision"/><path d="M897.3 265.4 L898.7 267.0 L901.2 263.6" fill="none" stroke="#3a3a3a" stroke-width="0.9" shape-rendering="geometricPrecision"/>
<rect x="895.4" y="298" width="53.3" height="10.9" rx="1.5" fill="#535353" stroke="#6e6e6e" stroke-width="0.7" shape-rendering="geometricPrecision"/>
<rect x="954.4" y="298" width="53.3" height="10.9" rx="1.5" fill="#535353" stroke="#6e6e6e" stroke-width="0.7" shape-rendering="geometricPrecision"/>
<defs><linearGradient id="bar" x1="0" x2="1"><stop offset="0" stop-color="#d01c1c"/><stop offset="0.5" stop-color="#ea3530"/><stop offset="1" stop-color="#d0605a"/></linearGradient></defs>
<rect x="251.90" y="304.6" width="3" height="3.2" fill="#b0222e" shape-rendering="geometricPrecision"/>
<rect x="262.22" y="304.6" width="3" height="3.2" fill="#b0222e" shape-rendering="geometricPrecision"/>
<rect x="272.53" y="304.6" width="3" height="3.2" fill="#b0222e" shape-rendering="geometricPrecision"/>
<rect x="282.85" y="304.6" width="3" height="3.2" fill="#b0222e" shape-rendering="geometricPrecision"/>
<rect x="293.16" y="304.6" width="3" height="3.2" fill="#b0222e" shape-rendering="geometricPrecision"/>
<rect x="303.48" y="304.6" width="3" height="3.2" fill="#b0222e" shape-rendering="geometricPrecision"/>
<rect x="313.79" y="304.6" width="3" height="3.2" fill="#b0222e" shape-rendering="geometricPrecision"/>
<rect x="324.11" y="304.6" width="3" height="3.2" fill="#b0222e" shape-rendering="geometricPrecision"/>
<rect x="334.42" y="304.6" width="3" height="3.2" fill="#b0222e" shape-rendering="geometricPrecision"/>
<rect x="344.74" y="304.6" width="3" height="3.2" fill="#b0222e" shape-rendering="geometricPrecision"/>
<rect x="355.05" y="304.6" width="3" height="3.2" fill="#b0222e" shape-rendering="geometricPrecision"/>
<rect x="365.37" y="304.6" width="3" height="3.2" fill="#b0222e" shape-rendering="geometricPrecision"/>
<rect x="375.68" y="304.6" width="3" height="3.2" fill="#b0222e" shape-rendering="geometricPrecision"/>
<rect x="386.00" y="304.6" width="3" height="3.2" fill="#b0222e" shape-rendering="geometricPrecision"/>
<rect x="396.31" y="304.6" width="3" height="3.2" fill="#b0222e" shape-rendering="geometricPrecision"/>
<rect x="406.73" y="287.50" width="2.8" height="34.80" fill="url(#bar)" shape-rendering="geometricPrecision"/>
<rect x="417.04" y="267.00" width="2.8" height="76.50" fill="url(#bar)" shape-rendering="geometricPrecision"/>
<rect x="427.36" y="255.20" width="2.8" height="99.30" fill="url(#bar)" shape-rendering="geometricPrecision"/>
<rect x="437.67" y="265.80" width="2.8" height="78.20" fill="url(#bar)" shape-rendering="geometricPrecision"/>
<rect x="447.99" y="265.80" width="2.8" height="78.20" fill="url(#bar)" shape-rendering="geometricPrecision"/>
<rect x="458.30" y="248.00" width="2.8" height="113.50" fill="url(#bar)" shape-rendering="geometricPrecision"/>
<rect x="468.62" y="250.50" width="2.8" height="109.00" fill="url(#bar)" shape-rendering="geometricPrecision"/>
<rect x="478.93" y="250.50" width="2.8" height="109.00" fill="url(#bar)" shape-rendering="geometricPrecision"/>
<rect x="489.25" y="287.30" width="2.8" height="34.70" fill="url(#bar)" shape-rendering="geometricPrecision"/>
<rect x="499.56" y="291.50" width="2.8" height="26.50" fill="url(#bar)" shape-rendering="geometricPrecision"/>
<rect x="509.88" y="277.30" width="2.8" height="55.00" fill="url(#bar)" shape-rendering="geometricPrecision"/>
<rect x="520.19" y="273.90" width="2.8" height="62.00" fill="url(#bar)" shape-rendering="geometricPrecision"/>
<rect x="530.50" y="278.80" width="2.8" height="51.90" fill="url(#bar)" shape-rendering="geometricPrecision"/>
<rect x="540.82" y="290.30" width="2.8" height="29.20" fill="url(#bar)" shape-rendering="geometricPrecision"/>
<rect x="551.13" y="292.70" width="2.8" height="24.50" fill="url(#bar)" shape-rendering="geometricPrecision"/>
<rect x="561.45" y="294.80" width="2.8" height="20.10" fill="url(#bar)" shape-rendering="geometricPrecision"/>
<rect x="571.76" y="295.60" width="2.8" height="18.80" fill="url(#bar)" shape-rendering="geometricPrecision"/>
<rect x="582.08" y="299.00" width="2.8" height="11.50" fill="url(#bar)" shape-rendering="geometricPrecision"/>
<rect x="592.29" y="304.6" width="3" height="3.2" fill="#b0222e" shape-rendering="geometricPrecision"/>
<rect x="602.61" y="304.6" width="3" height="3.2" fill="#b0222e" shape-rendering="geometricPrecision"/>
<rect x="612.92" y="304.6" width="3" height="3.2" fill="#b0222e" shape-rendering="geometricPrecision"/>
<rect x="623.24" y="304.6" width="3" height="3.2" fill="#b0222e" shape-rendering="geometricPrecision"/>
<rect x="633.55" y="304.6" width="3" height="3.2" fill="#b0222e" shape-rendering="geometricPrecision"/>
<rect x="643.87" y="304.6" width="3" height="3.2" fill="#b0222e" shape-rendering="geometricPrecision"/>
<rect x="654.18" y="304.6" width="3" height="3.2" fill="#b0222e" shape-rendering="geometricPrecision"/>
<rect x="664.50" y="304.6" width="3" height="3.2" fill="#b0222e" shape-rendering="geometricPrecision"/>
<rect x="674.81" y="304.6" width="3" height="3.2" fill="#b0222e" shape-rendering="geometricPrecision"/>
<rect x="685.13" y="304.6" width="3" height="3.2" fill="#b0222e" shape-rendering="geometricPrecision"/>
<rect x="695.44" y="304.6" width="3" height="3.2" fill="#b0222e" shape-rendering="geometricPrecision"/>
<rect x="705.76" y="304.6" width="3" height="3.2" fill="#b0222e" shape-rendering="geometricPrecision"/>
<rect x="716.07" y="304.6" width="3" height="3.2" fill="#b0222e" shape-rendering="geometricPrecision"/>
<rect x="726.39" y="304.6" width="3" height="3.2" fill="#b0222e" shape-rendering="geometricPrecision"/>
<rect x="736.70" y="304.6" width="3" height="3.2" fill="#b0222e" shape-rendering="geometricPrecision"/>
<rect x="40" y="545.7" width="230" height="9.1" fill="#535353" shape-rendering="geometricPrecision"/>
<rect x="153" y="545.7" width="105.5" height="9.1" fill="#525252" shape-rendering="geometricPrecision"/>
<rect x="153" y="545.7" width="0.8" height="9.1" fill="#484848" shape-rendering="geometricPrecision"/>
<rect x="270" y="545.7" width="589" height="9.1" fill="#4b4b4b" shape-rendering="geometricPrecision"/>
<rect x="551.3" y="546.3" width="13.7" height="6.6" rx="3.3" fill="#5e5e5e" shape-rendering="geometricPrecision"/>
<path d="M853.3 547.5 L855 549.5 L853.3 551.5" fill="none" stroke="#c0c0c0" stroke-width="0.8" shape-rendering="geometricPrecision"/>
<path d="M273.9 547.5 L272.2 549.5 L273.9 551.5" fill="none" stroke="#b0b0b0" stroke-width="0.8" shape-rendering="geometricPrecision"/>
<path d="M263 546.8 L266.6 549.6 L263 552.4 Z" fill="#d0d0d0" shape-rendering="geometricPrecision"/>
<rect x="258.5" y="545" width="1" height="9" fill="#4a4a4a" />
<rect x="268.5" y="545" width="1" height="9" fill="#4a4a4a" />
<rect x="859.5" y="290.4" width="7.5" height="13.3" rx="3.7" fill="#5c5c5c" shape-rendering="geometricPrecision"/>
<path d="M861.00 540.20 L863.00 542.20 L865.00 540.20" fill="none" stroke="#bdbdbd" stroke-width="0.8" shape-rendering="geometricPrecision"/>
<path d="M861 56 L863 54 L865 56" fill="none" stroke="#9a9a9a" stroke-width="0.8" shape-rendering="geometricPrecision"/>
<rect x="42" y="546.2" width="25.8" height="7.8" fill="#474747" />
<rect x="68.7" y="546.2" width="8.9" height="7.8" fill="#4c4c4c" />
<path d="M71.10 549.60 L73.10 551.60 L75.10 549.60" fill="none" stroke="#d0d0d0" stroke-width="0.9" shape-rendering="geometricPrecision"/>
<rect x="78.9" y="545.6" width="20.9" height="8.4" fill="#505050" />
<g fill="#7a7a7a" shape-rendering="geometricPrecision"><rect x="83.2" y="547.8" width="0.8" height="4"/><path d="M87.3 547.8 L84.5 549.8 L87.3 551.8 Z"/><path d="M93.8 547.8 L91 549.8 L93.8 551.8 Z"/></g>
<rect x="100.8" y="546.2" width="19.9" height="7.8" fill="#474747" />
<rect x="122" y="546.2" width="8.9" height="7.8" fill="#4c4c4c" />
<path d="M124.50 549.60 L126.50 551.60 L128.50 549.60" fill="none" stroke="#d0d0d0" stroke-width="0.9" shape-rendering="geometricPrecision"/>
<rect x="131" y="545.6" width="22" height="8.4" fill="#505050" />
<g fill="#7a7a7a" shape-rendering="geometricPrecision"><path d="M136 547.8 L138.8 549.8 L136 551.8 Z"/><path d="M142.5 547.8 L145.3 549.8 L142.5 551.8 Z"/><rect x="145.6" y="547.8" width="0.8" height="4"/></g>
<g shape-rendering="geometricPrecision"><path d="M8.1 561.6 L11.6 561.1 V565.1 H8.1 Z M12.3 561 L17.2 560.3 V565.1 H12.3 Z M8.1 565.8 H11.6 V569.8 L8.1 569.3 Z M12.3 565.8 H17.2 V570.6 L12.3 569.9 Z" fill="#f4f4f4"/></g>
<g shape-rendering="geometricPrecision"><circle cx="37.6" cy="564" r="2.7" fill="none" stroke="#333" stroke-width="0.9"/><path d="M35.7 566 L32.6 569.2" stroke="#333" stroke-width="1"/></g>
<g shape-rendering="geometricPrecision"><g fill="none" stroke="#c8c8c8" stroke-width="0.9"><rect x="218.5" y="561.8" width="4.8" height="6.2"/><path d="M217 561.2 H224.8 M217 568.6 H224.8"/></g><rect x="225.4" y="562.5" width="0.9" height="6" fill="#c8c8c8"/><circle cx="225.9" cy="561" r="0.7" fill="#e0e0e0"/></g>
<g shape-rendering="geometricPrecision"><path d="M243 560.8 H247 L248 561.8 H255 V569.8 H243 Z" fill="#f8cf5a"/><rect x="243" y="562.3" width="12.2" height="7.5" fill="#fbd86a"/><rect x="244.5" y="565.8" width="9.2" height="4" fill="#3a96d6"/><rect x="246.5" y="567.3" width="5" height="1.5" fill="#f8cf5a"/><rect x="244" y="560" width="2" height="0.8" fill="#e06040"/></g>
<g shape-rendering="geometricPrecision"><rect x="268.9" y="559" width="12.4" height="12.5" fill="#050505"/><path d="M272.8 561.2 H274.3 L276.3 566.5 V561.2 H277.6 V569.8 L276.1 569.5 L274.1 564.3 V569.5 L272.8 569.7 Z" fill="#d81f26"/></g>
<g shape-rendering="geometricPrecision"><circle cx="301.2" cy="565.1" r="6.1" fill="#dd4437"/><path d="M301.2 565.1 L296 568.1 A6.1 6.1 0 0 0 301.2 571.2 Z" fill="#1da462"/><path d="M301.2 565.1 L295.9 568.1 A6.1 6.1 0 0 1 296.5 561.2 L298.3 564.2 Z" fill="#1da462"/><path d="M301.2 565.1 L307.3 565.1 A6.1 6.1 0 0 1 301.2 571.2 L303.5 567 Z" fill="#ffcd46"/><circle cx="301.2" cy="565.1" r="2.7" fill="#f4f4f4"/><circle cx="301.2" cy="565.1" r="2.1" fill="#4a8af4"/></g>
<rect x="290.8" y="574.8" width="21.2" height="1.2" fill="#8ac4f0" />
<g shape-rendering="geometricPrecision"><rect x="320.7" y="558.6" width="13.3" height="13.3" fill="#1478d4"/><circle cx="327.3" cy="565.2" r="4" fill="#4cbf5a" stroke="#e8f4e8" stroke-width="0.7"/><path d="M323.5 569.5 L324.2 567.5 L325.5 568.7 Z" fill="#e8f4e8"/><path d="M325.8 563.6 C326 566 327.5 567 329 567" fill="none" stroke="#f4f4f4" stroke-width="0.8"/></g>
<g shape-rendering="geometricPrecision"><rect x="348" y="559" width="10.9" height="10.8" rx="1.5" fill="#d2171d"/><path d="M350.5 566.8 C349.5 566.8 349.5 564.2 351.2 564.3 C351.5 562.5 354.5 562.2 355.3 564 C357 563.8 357.3 566.8 355.8 566.8 Z" fill="none" stroke="#f0d0d0" stroke-width="0.8"/></g>
<rect x="343" y="574.8" width="21" height="1.2" fill="#8ac4f0" />
<g shape-rendering="geometricPrecision"><rect x="374.1" y="559.4" width="10.8" height="10.1" fill="#001e36" stroke="#2fa8f8" stroke-width="0.8"/><text x="375.6" y="567.3" font-size="6.2" font-weight="700" fill="#2fa8f8" font-family="Liberation Sans">Ps</text></g>
<g shape-rendering="geometricPrecision"><path d="M401.5 559.9 H408 L410.2 562 V570.7 H401.5 Z" fill="#f4f4f4"/></g>
<rect x="419" y="554.8" width="25.7" height="21.2" fill="#3b474e" shape-rendering="geometricPrecision"/>
<rect x="419" y="574.8" width="25.7" height="1.2" fill="#8ac4f0" />
<g shape-rendering="geometricPrecision"><rect x="426.4" y="559.4" width="11.2" height="10.1" fill="#2e1000" stroke="#f08a10" stroke-width="0.9"/><text x="428" y="567.3" font-size="6.2" font-weight="700" fill="#f08a10" font-family="Liberation Sans">Ai</text></g>
<g shape-rendering="geometricPrecision"><rect x="452.4" y="559.4" width="11.4" height="10.1" rx="0.6" fill="#23005a" stroke="#9a88f8" stroke-width="0.9"/><path d="M455 561.5 L461 567.8 H455 Z" fill="#b8a8ff"/></g>
<g shape-rendering="geometricPrecision"><rect x="478.6" y="559.4" width="11.4" height="10.1" fill="#00202a" stroke="#a8bccc" stroke-width="0.9"/><text x="480.4" y="567.3" font-size="6" font-weight="400" fill="#c0d0dc" font-family="Liberation Sans">Lr</text></g>
<g shape-rendering="geometricPrecision"><path d="M510.3 559.9 L515.8 570 H504.8 Z" fill="#f88a10"/><path d="M508.3 563.5 H512.3 L513 565 H507.6 Z M507 566.8 H513.6 L514.3 568.2 H506.3 Z" fill="#f4f4f4"/><rect x="504.5" y="569.3" width="11.5" height="1.8" fill="#f88a10"/></g>
<g shape-rendering="geometricPrecision"><path d="M530.5 568 C530 562 532 560 533.5 560.2 L536.4 564 L539.3 560.2 C540.8 560 542.8 562 542.3 568 L540.3 570.7 L539.5 565.5 L536.4 568.5 L533.3 565.5 L532.5 570.7 Z" fill="#1a55e8"/></g>
<g shape-rendering="geometricPrecision"><path d="M557.6 560.4 H567.8 V571 L566 569.4 H557.6 Z" fill="#8090e0"/><path d="M559.5 563.5 C561.5 562.4 564 562.4 566 563.5 L566.4 566.5 C564.5 567.7 561 567.7 559.1 566.5 Z" fill="#f4f4f4"/><circle cx="561.3" cy="565.2" r="0.7" fill="#8090e0"/><circle cx="564.2" cy="565.2" r="0.7" fill="#8090e0"/></g>
<g shape-rendering="geometricPrecision"><rect x="583.2" y="559.9" width="11.1" height="10.8" fill="#f2285a"/><rect x="590.5" y="566.8" width="1.8" height="1.6" fill="#f8f8f8"/></g>
<g shape-rendering="geometricPrecision"><circle cx="614.5" cy="565.2" r="5.8" fill="#0f2a5a"/><circle cx="616.5" cy="563.5" r="2.2" fill="none" stroke="#f0f0f0" stroke-width="1.1"/><path d="M609.3 566.5 L614.5 568.3 L616 565.5" fill="none" stroke="#f0f0f0" stroke-width="1.6"/><path d="M612 570 C614 571 617.5 570.5 619.5 568" fill="none" stroke="#2a88c8" stroke-width="1.2"/></g>
<g shape-rendering="geometricPrecision"><path d="M636.5 565.3 H646.3 C646.5 561.5 644 559.5 641.2 559.5 C637.8 559.5 635.7 562.3 635.7 565.5 C635.7 569 638.5 571 641.5 571 C643.5 571 645 570.4 646 569.6 V567.4 C645 568.5 643.5 569 642 569 C640 569 638.6 567.8 638.5 566.9 H646.3" fill="#0a7ad8"/><path d="M638.6 564 C638.8 562.5 640 561.5 641.4 561.5 C642.8 561.5 643.8 562.5 643.9 564 Z" fill="#1f2a2f"/></g>
<rect x="630.3" y="574.8" width="21.6" height="1.2" fill="#8ac4f0" />
<path d="M891.2 566.5 L894.5 563.3 L897.8 566.5" fill="none" stroke="#e0e0e0" stroke-width="0.9" shape-rendering="geometricPrecision"/>
<g shape-rendering="geometricPrecision"><g fill="none" stroke="#d0d0d0" stroke-width="0.8"><path d="M904.5 569 A7 7 0 0 1 911.3 562.2"/><path d="M906.8 569 A4.7 4.7 0 0 1 911.3 564.5"/><path d="M909 569 A2.4 2.4 0 0 1 911.3 566.8"/></g></g>
<g shape-rendering="geometricPrecision"><rect x="916.5" y="562.5" width="7.5" height="4.5" fill="#d8d8d8"/><rect x="916" y="561.6" width="2.4" height="1.3" fill="#e8e8e8"/><rect x="917.8" y="563.6" width="1.2" height="2.4" fill="#1c1e20"/></g>
<g shape-rendering="geometricPrecision"><path d="M928.3 563.7 H930 L932.5 561.5 V569.3 L930 567.1 H928.3 Z" fill="none" stroke="#d8d8d8" stroke-width="0.8"/><path d="M934.2 563 C935 564.5 935 566.3 934.2 567.8 M936 562.2 C937.2 564.5 937.2 566.3 936 568.6" fill="none" stroke="#b0b0b0" stroke-width="0.6"/></g>
<g shape-rendering="geometricPrecision"><path d="M1002 561.3 H1013 V568.3 H1005 L1002.5 570 V568.3 H1002 Z" fill="#f0f0f0"/><path d="M1003.8 563.3 H1011 M1003.8 565 H1011 M1003.8 566.6 H1009" stroke="#1a1a1a" stroke-width="0.6"/><circle cx="1011.8" cy="569.3" r="2.6" fill="#1a1a1a" stroke="#e0e0e0" stroke-width="0.6"/><text x="1010.6" y="571.1" font-size="4.2" fill="#e8e8e8" font-family="Liberation Sans">3</text></g>
<rect x="1020.8" y="555" width="0.6" height="21" fill="#5a5a5a" />
<text x="47.6" y="10.20" font-size="7.41" fill="#d4d4d4" stroke="#d4d4d4" font-weight="400" textLength="10.50" lengthAdjust="spacingAndGlyphs" >File</text>
<text x="65.7" y="10.20" font-size="7.41" fill="#d4d4d4" stroke="#d4d4d4" font-weight="400" textLength="10.80" lengthAdjust="spacingAndGlyphs" >Edit</text>
<text x="84" y="10.20" font-size="7.41" fill="#d4d4d4" stroke="#d4d4d4" font-weight="400" textLength="18.80" lengthAdjust="spacingAndGlyphs" >Object</text>
<text x="111" y="10.20" font-size="7.41" fill="#d4d4d4" stroke="#d4d4d4" font-weight="400" textLength="13.10" lengthAdjust="spacingAndGlyphs" >Type</text>
<text x="132" y="10.20" font-size="7.41" fill="#d4d4d4" stroke="#d4d4d4" font-weight="400" textLength="17.10" lengthAdjust="spacingAndGlyphs" >Select</text>
<text x="156.7" y="10.20" font-size="7.41" fill="#d4d4d4" stroke="#d4d4d4" font-weight="400" textLength="16.30" lengthAdjust="spacingAndGlyphs" >Effect</text>
<text x="180.8" y="10.20" font-size="7.41" fill="#d4d4d4" stroke="#d4d4d4" font-weight="400" textLength="13.40" lengthAdjust="spacingAndGlyphs" >View</text>
<text x="201.8" y="10.20" font-size="7.41" fill="#d4d4d4" stroke="#d4d4d4" font-weight="400" textLength="23.50" lengthAdjust="spacingAndGlyphs" >Window</text>
<text x="232.9" y="10.20" font-size="7.41" fill="#d4d4d4" stroke="#d4d4d4" font-weight="400" textLength="13.30" lengthAdjust="spacingAndGlyphs" >Help</text>
<text x="813.6" y="10.20" font-size="7.41" fill="#d4d4d4" stroke="#d4d4d4" font-weight="400" textLength="46.40" lengthAdjust="spacingAndGlyphs" >Essentials Classic</text>
<text x="896" y="10.00" font-size="6.31" fill="#7a7a7a" stroke="#7a7a7a" font-weight="400" textLength="51.70" lengthAdjust="spacingAndGlyphs" >Search Adobe Stock</text>
<text x="7.9" y="28.05" font-size="6.17" fill="#cfcfcf" stroke="#cfcfcf" font-weight="400" textLength="29.10" lengthAdjust="spacingAndGlyphs" >No Selection</text>
<text x="100.9" y="28.05" font-size="6.17" fill="#cfcfcf" stroke="#cfcfcf" font-weight="400" textLength="16.50" lengthAdjust="spacingAndGlyphs" >Stroke:</text>
<text x="259" y="28.05" font-size="6.17" fill="#333333" stroke="#333333" font-weight="400" textLength="12.70" lengthAdjust="spacingAndGlyphs" >Basic</text>
<text x="287.8" y="28.05" font-size="6.17" fill="#cfcfcf" stroke="#cfcfcf" font-weight="400" textLength="19.70" lengthAdjust="spacingAndGlyphs" >Opacity:</text>
<text x="312.6" y="28.05" font-size="6.17" fill="#d8d8d8" stroke="#d8d8d8" font-weight="400" textLength="13.30" lengthAdjust="spacingAndGlyphs" >100%</text>
<text x="350" y="28.05" font-size="6.17" fill="#8c8c8c" stroke="#8c8c8c" font-weight="400" textLength="13.30" lengthAdjust="spacingAndGlyphs" >Styles:</text>
<text x="399" y="28.05" font-size="6.17" fill="#e0e0e0" stroke="#e0e0e0" font-weight="400" textLength="39.00" lengthAdjust="spacingAndGlyphs" >Document Setup</text>
<text x="451" y="28.05" font-size="6.17" fill="#e0e0e0" stroke="#e0e0e0" font-weight="400" textLength="27.70" lengthAdjust="spacingAndGlyphs" >Preferences</text>
<text x="44.9" y="45.00" font-size="6.04" fill="#dcdcdc" stroke="#dcdcdc" font-weight="400" textLength="99.20" lengthAdjust="spacingAndGlyphs" >11.jpeg* @ 25% (RGB/GPU Preview)</text>
<text x="165.2" y="45.00" font-size="6.04" fill="#a4a4a4" stroke="#a4a4a4" font-weight="400" textLength="105.30" lengthAdjust="spacingAndGlyphs" >55.jpeg @ 51,06% (RGB/GPU Preview)</text>
<text x="291.5" y="45.00" font-size="6.04" fill="#a4a4a4" stroke="#a4a4a4" font-weight="400" textLength="108.50" lengthAdjust="spacingAndGlyphs" >394.jpeg @ 51,06% (RGB/GPU Preview)</text>
<text x="421" y="45.00" font-size="6.04" fill="#a4a4a4" stroke="#a4a4a4" font-weight="400" textLength="108.00" lengthAdjust="spacingAndGlyphs" >969.jpeg @ 51,06% (RGB/GPU Preview)</text>
<text x="551" y="45.00" font-size="6.04" fill="#a4a4a4" stroke="#a4a4a4" font-weight="400" textLength="114.00" lengthAdjust="spacingAndGlyphs" >10086.jpeg @ 51,06% (RGB/GPU Preview)</text>
<text x="895" y="50.15" font-size="5.35" fill="#f0f0f0" stroke="#f0f0f0" font-weight="700" textLength="25.20" lengthAdjust="spacingAndGlyphs" >Properties</text>
<text x="930" y="50.15" font-size="5.35" fill="#a0a0a0" stroke="#a0a0a0" font-weight="400" textLength="21.00" lengthAdjust="spacingAndGlyphs" >Libraries</text>
<text x="895" y="66.95" font-size="5.35" fill="#cfcfcf" stroke="#cfcfcf" font-weight="400" textLength="30.00" lengthAdjust="spacingAndGlyphs" >No Selection</text>
<text x="895.3" y="84.45" font-size="5.35" fill="#cfcfcf" stroke="#cfcfcf" font-weight="400" textLength="24.10" lengthAdjust="spacingAndGlyphs" >Document</text>
<text x="924.4" y="98.95" font-size="5.35" fill="#cfcfcf" stroke="#cfcfcf" font-weight="400" textLength="13.60" lengthAdjust="spacingAndGlyphs" >Units:</text>
<text x="944.2" y="98.95" font-size="5.35" fill="#e0e0e0" stroke="#e0e0e0" font-weight="400" textLength="13.80" lengthAdjust="spacingAndGlyphs" >Pixels</text>
<text x="915.7" y="114.15" font-size="5.35" fill="#cfcfcf" stroke="#cfcfcf" font-weight="400" textLength="22.30" lengthAdjust="spacingAndGlyphs" >Artboard:</text>
<text x="943.5" y="114.15" font-size="5.35" fill="#e0e0e0" stroke="#e0e0e0" font-weight="400" textLength="2.50" lengthAdjust="spacingAndGlyphs" >1</text>
<text x="946.3" y="129.85" font-size="5.35" fill="#e6e6e6" stroke="#e6e6e6" font-weight="400" textLength="34.00" lengthAdjust="spacingAndGlyphs" >Edit Artboards</text>
<text x="895" y="153.05" font-size="5.35" fill="#cfcfcf" stroke="#cfcfcf" font-weight="400" textLength="31.80" lengthAdjust="spacingAndGlyphs" >Ruler &amp; Grids</text>
<text x="895" y="174.75" font-size="5.35" fill="#cfcfcf" stroke="#cfcfcf" font-weight="400" textLength="16.50" lengthAdjust="spacingAndGlyphs" >Guides</text>
<text x="895" y="195.95" font-size="5.35" fill="#cfcfcf" stroke="#cfcfcf" font-weight="400" textLength="31.80" lengthAdjust="spacingAndGlyphs" >Snap Options</text>
<text x="895" y="214.95" font-size="5.35" fill="#cfcfcf" stroke="#cfcfcf" font-weight="400" textLength="28.00" lengthAdjust="spacingAndGlyphs" >Preferences</text>
<text x="895" y="229.15" font-size="5.35" fill="#cfcfcf" stroke="#cfcfcf" font-weight="400" textLength="49.90" lengthAdjust="spacingAndGlyphs" >Keyboard Increment:</text>
<text x="950.8" y="229.15" font-size="5.35" fill="#e0e0e0" stroke="#e0e0e0" font-weight="400" textLength="10.00" lengthAdjust="spacingAndGlyphs" >1 px</text>
<text x="904.8" y="242.05" font-size="5.35" fill="#e0e0e0" stroke="#e0e0e0" font-weight="400" textLength="48.00" lengthAdjust="spacingAndGlyphs" >Use Preview Bounds</text>
<text x="904.8" y="254.35" font-size="5.35" fill="#e0e0e0" stroke="#e0e0e0" font-weight="400" textLength="32.40" lengthAdjust="spacingAndGlyphs" >Scale Corners</text>
<text x="904.8" y="267.25" font-size="5.35" fill="#e0e0e0" stroke="#e0e0e0" font-weight="400" textLength="54.20" lengthAdjust="spacingAndGlyphs" >Scale Strokes &amp; Effects</text>
<text x="895" y="291.15" font-size="5.35" fill="#b8b8b8" stroke="#b8b8b8" font-weight="400" textLength="32.30" lengthAdjust="spacingAndGlyphs" >Quick Actions</text>
<text x="902.5" y="305.95" font-size="5.35" fill="#e6e6e6" stroke="#e6e6e6" font-weight="400" textLength="39.50" lengthAdjust="spacingAndGlyphs" >Document Setup</text>
<text x="966.7" y="305.95" font-size="5.35" fill="#e6e6e6" stroke="#e6e6e6" font-weight="400" textLength="28.30" lengthAdjust="spacingAndGlyphs" >Preferences</text>
<text x="42.7" y="552.70" font-size="4.94" fill="#d0d0d0" stroke="#d0d0d0" font-weight="400" textLength="11.40" lengthAdjust="spacingAndGlyphs" >25%</text>
<text x="102.3" y="552.70" font-size="4.94" fill="#d0d0d0" stroke="#d0d0d0" font-weight="400" textLength="2.20" lengthAdjust="spacingAndGlyphs" >1</text>
<text x="196.4" y="552.90" font-size="4.94" fill="#c8c8c8" stroke="#c8c8c8" font-weight="400" textLength="21.10" lengthAdjust="spacingAndGlyphs" >Selection</text>
<text x="47.3" y="569.00" font-size="7.41" fill="#505050" stroke="#505050" font-weight="400" textLength="67.70" lengthAdjust="spacingAndGlyphs" style="stroke-width:0.08px">Type here to search</text>
<text x="942.6" y="567.20" font-size="6.04" fill="#e0e0e0" stroke="#e0e0e0" font-weight="400" textLength="11.90" lengthAdjust="spacingAndGlyphs" style="stroke-width:0.05px">ENG</text>
<text x="970" y="562.10" font-size="5.76" fill="#e0e0e0" stroke="#e0e0e0" font-weight="400" textLength="14.00" lengthAdjust="spacingAndGlyphs" style="stroke-width:0.05px">10:53</text>
<text x="961.3" y="571.80" font-size="5.76" fill="#e0e0e0" stroke="#e0e0e0" font-weight="400" textLength="31.20" lengthAdjust="spacingAndGlyphs" style="stroke-width:0.05px">2020/04/26</text>
</svg>
</body></html>
